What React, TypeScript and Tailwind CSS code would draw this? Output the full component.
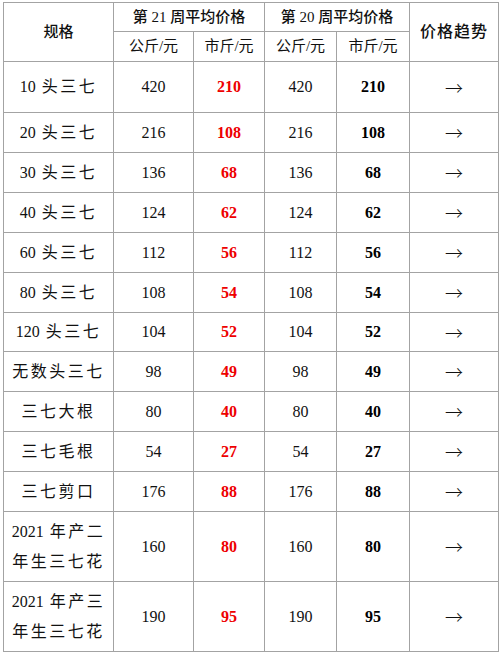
import React from "react";

type Row = { name: React.ReactNode; a: string; b: string; c: string; d: string; h: string };

const cjk = (s: string) => <span className="tracking-[2.5px]">{s}</span>;
const lead = (n: string, s: string) => (
  <>
    {n}
    <span className="ml-[6px] tracking-[2.5px]">{s}</span>
  </>
);

const rows: Row[] = [
  { name: lead("10", "头三七"), a: "420", b: "210", c: "420", d: "210", h: "h-[51px]" },
  { name: lead("20", "头三七"), a: "216", b: "108", c: "216", d: "108", h: "h-[40px]" },
  { name: lead("30", "头三七"), a: "136", b: "68", c: "136", d: "68", h: "h-[40px]" },
  { name: lead("40", "头三七"), a: "124", b: "62", c: "124", d: "62", h: "h-[40px]" },
  { name: lead("60", "头三七"), a: "112", b: "56", c: "112", d: "56", h: "h-[40px]" },
  { name: lead("80", "头三七"), a: "108", b: "54", c: "108", d: "54", h: "h-[40px]" },
  { name: lead("120", "头三七"), a: "104", b: "52", c: "104", d: "52", h: "h-[39px]" },
  { name: cjk("无数头三七"), a: "98", b: "49", c: "98", d: "49", h: "h-[40px]" },
  { name: cjk("三七大根"), a: "80", b: "40", c: "80", d: "40", h: "h-[40px]" },
  { name: cjk("三七毛根"), a: "54", b: "27", c: "54", d: "27", h: "h-[40px]" },
  { name: cjk("三七剪口"), a: "176", b: "88", c: "176", d: "88", h: "h-[40px]" },
  {
    name: (
      <>
        {lead("2021", "年产二")}
        <br />
        {cjk("年生三七花")}
      </>
    ),
    a: "160",
    b: "80",
    c: "160",
    d: "80",
    h: "h-[70px]",
  },
  {
    name: (
      <>
        {lead("2021", "年产三")}
        <br />
        {cjk("年生三七花")}
      </>
    ),
    a: "190",
    b: "95",
    c: "190",
    d: "95",
    h: "h-[70px]",
  },
];

const serif = "font-['Liberation_Serif','Noto_Sans_CJK_SC',serif]";
const cell = "border border-[#a3a3a3] p-0 text-center align-middle";

export default function App() {
  return (
    <div className="w-[500px] h-[653px] bg-white pl-[3px] pt-[2px]">
      <table className="border-collapse table-fixed w-[495px] text-[#111]">
        <colgroup>
          <col className="w-[110px]" />
          <col className="w-[80px]" />
          <col className="w-[71px]" />
          <col className="w-[72px]" />
          <col className="w-[73px]" />
          <col className="w-[89px]" />
        </colgroup>
        <thead>
          <tr className="h-[29px]">
            <th rowSpan={2} className={`${cell} ${serif} text-[15px] font-medium`}>
              规格
            </th>
            <th colSpan={2} className={`${cell} ${serif} text-[15px] font-medium`}>
              第 21 周平均价格
            </th>
            <th colSpan={2} className={`${cell} ${serif} text-[15px] font-medium`}>
              第 20 周平均价格
            </th>
            <th
              rowSpan={2}
              className={`${cell} ${serif} text-[16px] font-medium tracking-[1px]`}
            >
              价格趋势
            </th>
          </tr>
          <tr className="h-[30px]">
            <th className={`${cell} ${serif} text-[15px] font-normal`}>公斤/元</th>
            <th className={`${cell} ${serif} text-[15px] font-normal`}>市斤/元</th>
            <th className={`${cell} ${serif} text-[15px] font-normal`}>公斤/元</th>
            <th className={`${cell} ${serif} text-[15px] font-normal`}>市斤/元</th>
          </tr>
        </thead>
        <tbody>
          {rows.map((r, i) => (
            <tr key={i} className={r.h}>
              <td className={`${cell} ${serif} text-[16px] leading-[30px]`}>{r.name}</td>
              <td className={`${cell} ${serif} text-[16px]`}>{r.a}</td>
              <td className={`${cell} ${serif} text-[16px] font-bold text-[#ee0000]`}>
                {r.b}
              </td>
              <td className={`${cell} ${serif} text-[16px]`}>{r.c}</td>
              <td className={`${cell} ${serif} text-[16px] font-bold text-black`}>
                {r.d}
              </td>
              <td
                className={`${cell} font-['Noto_Sans_CJK_SC',sans-serif] text-[18px] font-light`}
              >
                →
              </td>
            </tr>
          ))}
        </tbody>
      </table>
    </div>
  );
}
